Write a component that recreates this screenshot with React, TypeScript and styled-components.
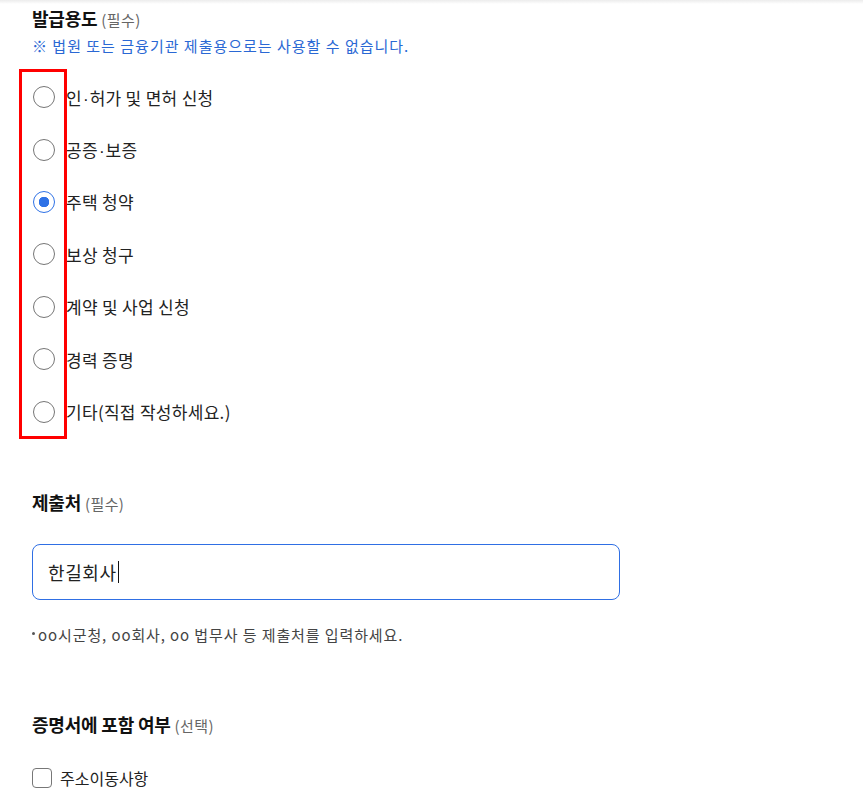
import React from 'react';
import styled, { createGlobalStyle } from 'styled-components';

const GlobalStyle = createGlobalStyle`
  html, body {
    margin: 0;
    padding: 0;
    background: #ffffff;
  }
  body {
    font-family: 'Noto Sans CJK KR', 'Noto Sans', sans-serif;
    color: #222222;
  }
`;

const TopShade = styled.div`
  height: 4px;
  background: linear-gradient(#ececec, #ffffff);
`;

const Page = styled.div`
  padding: 2px 32px 20px;
`;

const Title = styled.div<{ gap?: number }>`
  margin-top: ${({ gap }) => gap || 0}px;
  font-size: 18px;
  line-height: 24px;
  font-weight: 700;
  color: #111111;
  letter-spacing: -0.2px;
`;

const Hint = styled.span`
  font-size: 15px;
  font-weight: 400;
  color: #666666;
  letter-spacing: 0.4px;
`;

const Notice = styled.div`
  margin-top: 4px;
  font-size: 15px;
  line-height: 20px;
  letter-spacing: 1px;
  color: #2a68d4;
`;

const RadioList = styled.div`
  position: relative;
  margin-top: 15px;
  display: flex;
  flex-direction: column;
`;

const Highlight = styled.div`
  position: absolute;
  top: -2px;
  left: -13px;
  width: 48px;
  height: 370px;
  border: 3px solid #ff0000;
  box-sizing: border-box;
  pointer-events: none;
`;

const RadioRow = styled.label`
  height: 52.4px;
  display: flex;
  align-items: center;
  gap: 10px;
  font-size: 17px;
  letter-spacing: 0.3px;
  color: #222222;
`;

const MidDot = styled.span`
  font-family: 'Liberation Sans', sans-serif;
  letter-spacing: 0;
  margin: 0 1px;
`;

const RadioMark = styled.span<{ checked?: boolean }>`
  width: 24px;
  height: 24px;
  display: flex;
  align-items: center;
  justify-content: center;
  flex-shrink: 0;

  &::before {
    content: '';
    width: 22px;
    height: 22px;
    box-sizing: border-box;
    border-radius: 50%;
    border: ${({ checked }) => (checked ? '1.5px solid #2f72e6' : '1px solid #767676')};
    background: ${({ checked }) =>
      checked ? 'radial-gradient(circle, #2f72e6 0 5px, #ffffff 5.5px)' : '#ffffff'};
  }
`;

const Field = styled.div`
  margin-top: 28px;
  width: 588px;
  height: 56px;
  box-sizing: border-box;
  border: 1px solid #2f6fe4;
  border-radius: 8px;
  padding: 0 15px;
  display: flex;
  align-items: center;
  font-size: 18px;
  letter-spacing: 0.6px;
  color: #222222;
`;

const Caret = styled.span`
  width: 1px;
  height: 22px;
  margin-left: 1px;
  background: #111111;
`;

const Help = styled.div`
  margin-top: 25px;
  font-size: 15px;
  line-height: 20px;
  letter-spacing: 0.9px;
  color: #444444;
  display: flex;
  align-items: center;
  gap: 3px;

  &::before {
    content: '';
    width: 3px;
    height: 3px;
    border-radius: 50%;
    background: #555555;
    margin-top: -2px;
  }
`;

const CheckRow = styled.label`
  margin-top: 30px;
  display: flex;
  align-items: center;
  gap: 8px;
  font-size: 16px;
  line-height: 20px;
  color: #222222;
`;

const CheckBox = styled.span`
  width: 20px;
  height: 20px;
  box-sizing: border-box;
  border: 1px solid #777777;
  border-radius: 4px;
  background: #ffffff;
`;

const purposes = [
  ['인', '허가 및 면허 신청'],
  ['공증', '보증'],
  ['주택 청약'],
  ['보상 청구'],
  ['계약 및 사업 신청'],
  ['경력 증명'],
  ['기타(직접 작성하세요.)'],
];

const App: React.FC = () => {
  return (
    <>
      <GlobalStyle />
      <TopShade />
      <Page>
        <Title>
          발급용도 <Hint>(필수)</Hint>
        </Title>
        <Notice>※ 법원 또는 금융기관 제출용으로는 사용할 수 없습니다.</Notice>
        <RadioList>
          {purposes.map((parts, i) => (
            <RadioRow key={parts.join('·')}>
              <RadioMark checked={i === 2} />
              <span>
                {parts[0]}
                {parts[1] && (
                  <>
                    <MidDot>·</MidDot>
                    {parts[1]}
                  </>
                )}
              </span>
            </RadioRow>
          ))}
          <Highlight />
        </RadioList>

        <Title gap={52}>
          제출처 <Hint>(필수)</Hint>
        </Title>
        <Field>
          한길회사
          <Caret />
        </Field>
        <Help>oo시군청, oo회사, oo 법무사 등 제출처를 입력하세요.</Help>

        <Title gap={67}>
          증명서에 포함 여부 <Hint>(선택)</Hint>
        </Title>
        <CheckRow>
          <CheckBox />
          주소이동사항
        </CheckRow>
      </Page>
    </>
  );
};

export default App;
